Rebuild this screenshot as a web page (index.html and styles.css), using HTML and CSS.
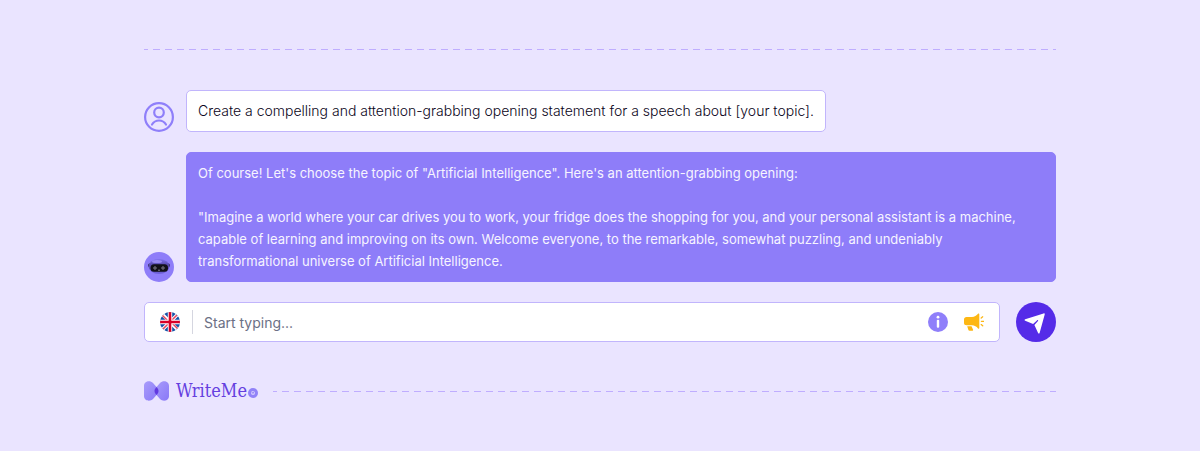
FILE: index.html
```html
<!DOCTYPE html>
<html lang="en">
  <head>
    <meta charset="UTF-8" />
    <meta name="viewport" content="width=device-width, initial-scale=1.0" />
    <title>WriteMe - Chat</title>
    <link rel="stylesheet" href="styles.css" />
  </head>
  <body>
    <main class="container">
      <div class="divider"></div>

      <div class="chat">
        <div class="message">
          <svg class="avatar" viewBox="0 0 30 30" fill="none" stroke="#8f7ffa" stroke-width="2.200" stroke-linecap="round" role="img" aria-label="You">
            <circle cx="15" cy="15" r="13.900" />
            <circle cx="15" cy="10.500" r="4.800" />
            <path d="M8 22.500c1.600-2.600 4.100-4 7-4s5.400 1.400 7 4" />
          </svg>
          <div class="bubble bubble-user">
            <p>Create a compelling and attention-grabbing opening statement for a speech about [your topic].</p>
          </div>
        </div>

        <div class="message">
          <svg class="avatar" viewBox="0 0 30 30" role="img" aria-label="Assistant">
            <defs>
              <linearGradient id="helmet" x1="0" y1="0" x2="0" y2="1">
                <stop offset="0" stop-color="#8073ee" />
                <stop offset="0.4" stop-color="#574aad" />
                <stop offset="1" stop-color="#7062dc" />
              </linearGradient>
            </defs>
            <circle cx="15" cy="15" r="15" fill="#8e7df9" />
            <rect x="4" y="11.500" width="22" height="3.500" rx="1.500" fill="#39345f" />
            <ellipse cx="15" cy="14.500" rx="10.500" ry="7.500" fill="url(#helmet)" />
            <ellipse cx="13" cy="9.500" rx="5" ry="1.600" fill="#a99dff" opacity=".7" />
            <rect x="6.500" y="12.300" width="17.500" height="7.500" rx="3.500" fill="#111018" />
            <g fill="none" stroke="#9a98a8" stroke-width=".8">
              <circle cx="11" cy="16" r="1.200" />
              <circle cx="19" cy="16" r="1.200" />
              <path d="M14 18q1 .8 2 0" />
            </g>
          </svg>
          <div class="bubble bubble-bot">
            <p>Of course! Let's choose the topic of "Artificial Intelligence". Here's an attention-grabbing opening:</p>
            <p>"Imagine a world where your car drives you to work, your fridge does the shopping for you, and your personal assistant is a machine, capable of learning and improving on its own. Welcome everyone, to the remarkable, somewhat puzzling, and undeniably transformational universe of Artificial Intelligence.</p>
          </div>
        </div>
      </div>

      <form class="composer">
        <div class="input-box">
          <button type="button" class="icon-button" aria-label="Language: English">
            <svg width="20" height="20" viewBox="0 0 20 20">
              <clipPath id="flag"><circle cx="10" cy="10" r="10" /></clipPath>
              <g clip-path="url(#flag)">
                <path fill="#1552a8" d="M0 0h20v20H0z" />
                <path stroke="#fff" stroke-width="3.500" d="M0 0l20 20M20 0L0 20" />
                <path stroke="#e5475d" stroke-width="1.500" d="M0 1l9 9M20 0l-9 9M20 19l-9-9M0 20l9-9" />
                <path stroke="#fff" stroke-width="4.400" d="M10 0v20M0 10h20" />
                <path stroke="#d80027" stroke-width="2.600" d="M10 0v20M0 10h20" />
              </g>
            </svg>
          </button>
          <input type="text" class="prompt" placeholder="Start typing..." aria-label="Message" />
          <button type="button" class="icon-button" aria-label="Info">
            <svg width="20" height="20" viewBox="0 0 20 20">
              <circle cx="10" cy="10" r="10" fill="#8f7ffa" />
              <circle cx="10" cy="5.200" r="1.400" fill="#fff" />
              <rect x="8.800" y="7.800" width="2.400" height="8" rx="1" fill="#fff" />
            </svg>
          </button>
          <button type="button" class="icon-button" aria-label="Tone">
            <svg width="20" height="20" viewBox="0 0 20 20" fill="#fdb713">
              <path d="M2.500 5H8c2.500 0 4.500-1.500 6-3.200.5-.6 1.300-.4 1.300.4V16c0 .8-.8 1-1.300.4C12.500 14.600 10.500 13.300 8 13.300H2.500C1 13.300 0 12.300 0 11V7.500C0 6 1 5 2.500 5z" />
              <path d="M3.200 14.200h4.300l1.500 3.200c.3.700-.1 1.400-.9 1.400H5.600c-.6 0-1-.3-1.200-.8z" />
              <path d="M17.400 9.300H20M17.200 6l1.500-1.200M17.200 12.600l1.500 1.200" stroke="#fdb713" stroke-width="1.300" stroke-linecap="round" />
            </svg>
          </button>
        </div>
        <button type="submit" class="send" aria-label="Send">
          <svg width="40" height="40" viewBox="0 0 40 40">
            <path d="M9.200 18.800c-.8-.3-.8-1.200 0-1.500l18.400-5.900c.7-.2 1.300.3 1.100 1.100l-5.100 18.400c-.2.800-1.200.9-1.500.1l-3.700-8 3.600-4c.5-.6-.2-1.300-.8-.8l-4.100 3.900z" fill="#fff" />
          </svg>
        </button>
      </form>

      <footer class="footer">
        <a href="#" class="logo">
          <svg width="26" height="20" viewBox="0 0 26 20">
            <defs>
              <linearGradient id="wing" x1="0" y1="0" x2="1" y2="1">
                <stop offset="0" stop-color="#a99cfb" />
                <stop offset="1" stop-color="#8978f7" />
              </linearGradient>
            </defs>
            <path fill="url(#wing)" d="M0 5C0 0 6-1 9 2l3.500 4c2.600 2.500 2.600 5.500 0 8L9 18c-3 3-9 2-9-3z" />
            <path fill="url(#wing)" d="M25 5c0-5-6-6-9-3l-3.500 4c-2.600 2.500-2.600 5.500 0 8l3.500 4c3 3 9 2 9-3z" />
            <path fill="#6139e0" d="M12.500 6c2.700 2.300 2.700 5.700 0 8-2.700-2.300-2.700-5.700 0-8z" />
          </svg>
          <span class="logo-text">WriteMe</span>
          <svg class="logo-dot" width="10" height="10" viewBox="0 0 10 10">
            <circle cx="5" cy="5" r="5" fill="#9182f8" />
            <circle cx="5" cy="5" r="2" fill="#d5cdfd" />
            <path d="M4 4l1 1.500L6 3.500" fill="none" stroke="#8170f2" stroke-width=".7" />
          </svg>
        </a>
        <div class="divider"></div>
      </footer>
    </main>
  </body>
</html>
```
FILE: styles.css
```css
* {
  box-sizing: border-box;
}

body {
  margin: 0;
  background-color: #eae4ff;
  color: #170f2e;
  font-family: "Inter", "Liberation Sans", sans-serif;
  font-size: 14px;
  line-height: 22px;
}

.container {
  width: 76%;
  margin: 0 auto;
  padding: 49px 0;
}

.divider {
  flex: 1;
  height: 1px;
  background: repeating-linear-gradient(90deg, #bfadff 0 7px, #eae4ff 7px 12px) -3px 0;
}

.chat {
  display: flex;
  flex-direction: column;
  gap: 20px;
  margin: 40px 0 20px;
}

.message {
  display: flex;
  align-items: flex-end;
  gap: 12px;
}

.avatar {
  flex: none;
  width: 30px;
  height: 30px;
}

.bubble {
  padding: 9px 11px;
  border: 1px solid #c1b5fc;
  border-radius: 5px;
}

.bubble p {
  margin: 0;
}

.bubble p + p {
  margin-top: 22px;
}

.bubble-user {
  background-color: #fff;
  color: #0b0520;
  font-weight: 300;
}

.bubble-bot {
  flex: 1;
  background-color: #8e7df9;
  border-color: #8e7df9;
  color: #f6f4ff;
  font-size: 13px;
}

.composer {
  display: flex;
  gap: 16px;
}

.input-box {
  flex: 1;
  display: flex;
  align-items: center;
  gap: 16px;
  height: 40px;
  padding: 0 15px;
  background-color: #fff;
  border: 1px solid #c1b5fc;
  border-radius: 5px;
}

.prompt {
  flex: 1;
  min-width: 0;
  height: 24px;
  margin-left: -4px;
  padding: 0 0 0 11px;
  border: 0;
  border-left: 1px solid #d5d6e0;
  outline: none;
  font: inherit;
  color: inherit;
}

.prompt::placeholder {
  color: #6b7085;
}

.icon-button,
.send {
  display: flex;
  padding: 0;
  border: 0;
  background: none;
  cursor: pointer;
}

.send {
  background-color: #552be8;
  border-radius: 50%;
}

.footer {
  display: flex;
  align-items: center;
  gap: 15px;
  margin-top: 38px;
}

.logo {
  display: flex;
  align-items: center;
  gap: 6px;
  color: #653fdf;
  text-decoration: none;
}

.logo-text {
  font-family: "DejaVu Serif Condensed", "DejaVu Serif", serif;
  font-size: 18px;
}

.logo-dot {
  margin: 4px 0 0 -5px;
}
```
